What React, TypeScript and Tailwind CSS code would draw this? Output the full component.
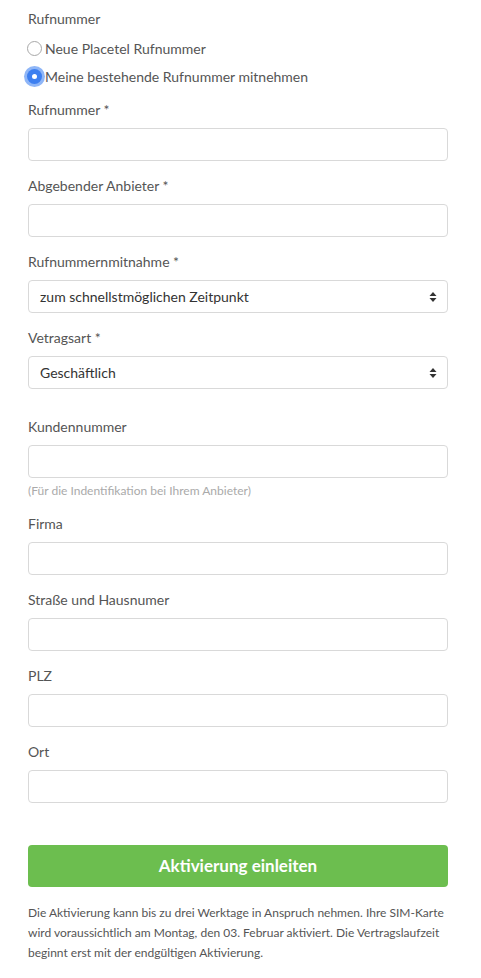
import { useState } from "react";

const font = { fontFamily: "Lato, 'Open Sans', sans-serif" };

function Field({ label, help }: { label: string; help?: string }) {
  return (
    <div className="mb-[15px]">
      <label className="block text-[14px] leading-[20px] text-[#555] mb-2">{label}</label>
      <input
        type="text"
        className="block w-full h-[33px] rounded-[4px] border border-[#d9d9d9] bg-white px-3 text-[14px] text-[#333] outline-none"
      />
      {help && (
        <p className="mt-[5px] mb-[10px] text-[12px] leading-[16px] text-[#aaa]">{help}</p>
      )}
    </div>
  );
}

function SelectField({ label, value }: { label: string; value: string }) {
  return (
    <div className="mb-[15px]">
      <label className="block text-[14px] leading-[20px] text-[#555] mb-2">{label}</label>
      <div className="relative h-[33px] rounded-[4px] border border-[#d9d9d9] bg-white flex items-center px-[11px]">
        <span className="text-[14px] text-[#333]">{value}</span>
        <svg
          className="absolute right-[10px] top-1/2 -translate-y-1/2"
          width="8"
          height="11"
          viewBox="0 0 8 11"
        >
          <path d="M4 0.5 L7.5 4.5 H0.5 Z" fill="#333" />
          <path d="M4 10.5 L7.5 6.5 H0.5 Z" fill="#333" />
        </svg>
      </div>
    </div>
  );
}

export default function App() {
  const [mode, setMode] = useState("mitnehmen");

  return (
    <main className="bg-white min-h-[978px] pl-[28px] pr-[33px] pt-[9px]" style={font}>
      {/* Rufnummer Auswahl */}
      <div className="text-[14px] leading-[20px] text-[#555]">Rufnummer</div>

      <div className="mt-[9px] space-y-[8px]">
        <label className="flex items-center h-[20px] text-[14px] text-[#555]">
          <span
            onClick={() => setMode("neu")}
            className={
              mode === "neu"
                ? "w-[15px] h-[15px] rounded-full bg-[#3d7ff0] flex items-center justify-center mr-[3px] -ml-[1px]"
                : "w-[15px] h-[15px] rounded-full border border-[#a8a8a8] bg-white mr-[3px] -ml-[1px]"
            }
          >
            {mode === "neu" && <span className="w-[5px] h-[5px] rounded-full bg-white" />}
          </span>
          Neue Placetel Rufnummer
        </label>
        <label className="flex items-center h-[20px] text-[14px] text-[#555]">
          <span
            onClick={() => setMode("mitnehmen")}
            className={
              mode === "mitnehmen"
                ? "w-[15px] h-[15px] rounded-full bg-[#3d7ff0] flex items-center justify-center mr-[3px] -ml-[1px] ring-[3px] ring-[#8fb6f7]"
                : "w-[15px] h-[15px] rounded-full border border-[#a8a8a8] bg-white mr-[3px] -ml-[1px]"
            }
          >
            {mode === "mitnehmen" && <span className="w-[5px] h-[5px] rounded-full bg-white" />}
          </span>
          Meine bestehende Rufnummer mitnehmen
        </label>
      </div>

      <div className="mt-[14px]">
        <Field label="Rufnummer *" />
        <Field label="Abgebender Anbieter *" />
        <SelectField label="Rufnummernmitnahme *" value="zum schnellstmöglichen Zeitpunkt" />
        <SelectField label="Vetragsart *" value="Geschäftlich" />
      </div>

      {/* Kundendaten */}
      <div className="mt-[28px]">
        <Field label="Kundennummer" help="(Für die Indentifikation bei Ihrem Anbieter)" />
        <Field label="Firma" />
        <Field label="Straße und Hausnumer" />
        <Field label="PLZ" />
        <Field label="Ort" />
      </div>

      <button className="mt-[27px] w-full h-[42px] rounded-[4px] bg-[#6cbe4f] text-white text-[17px] font-bold">
        Aktivierung einleiten
      </button>

      <p className="mt-[16px] text-[12px] leading-[20px] text-[#555]">
        Die Aktivierung kann bis zu drei Werktage in Anspruch nehmen. Ihre SIM-Karte wird
        voraussichtlich am Montag, den 03. Februar aktiviert. Die Vertragslaufzeit beginnt erst
        mit der endgültigen Aktivierung.
      </p>
    </main>
  );
}
